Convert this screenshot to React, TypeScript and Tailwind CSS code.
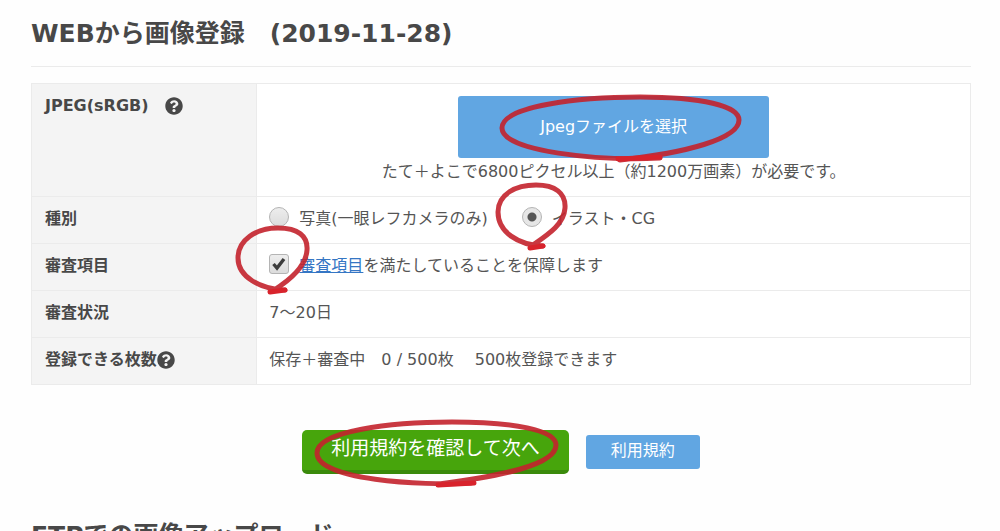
import { useState } from 'react';
import type { ReactNode } from 'react';
import { FaQuestionCircle } from 'react-icons/fa';

const MARKS = {
  file: {
    box: '0 0 250 72',
    className: 'left-[37px] -top-1 w-[250px] h-[72px]',
    loop: 'M165 66C105 69 7 60 7 36C7 14 84 5 145 5C207 5 244 14 244 28C244 47 190 61 125 68',
    tail: 'M123 67L165 65',
  },
  radio: {
    box: '0 0 80 72',
    className: '-left-[31px] -top-[28px] w-[80px] h-[72px]',
    loop: 'M52 67C27 66 7 53 7 33C7 15 25 6 45 6C64 6 75 14 74 29C73 45 58 55 42 66',
    tail: 'M39 69L52 67',
  },
  check: {
    box: '0 0 80 76',
    className: '-left-[37px] -top-[33px] w-[80px] h-[76px]',
    loop: 'M53 69C28 68 6 56 6 37C6 19 24 7 46 7C66 7 76 15 75 29C74 46 58 59 42 69',
    tail: 'M38 71L53 69',
  },
  next: {
    box: '0 0 250 76',
    className: 'left-[9px] -top-3 w-[250px] h-[76px]',
    loop: 'M160 65C110 68 6 62 6 35C6 13 80 4 141 4C203 4 245 12 245 27C245 47 190 58 128 66',
    tail: 'M127 67L163 65',
  },
};

// Hand drawn red circle around a control
const PenMark = ({ name }: { name: keyof typeof MARKS }) => {
  const mark = MARKS[name];
  return (
    <svg
      viewBox={mark.box}
      className={`absolute max-w-none pointer-events-none z-10 ${mark.className}`}
      fill="none"
      strokeWidth={5}
      strokeLinecap="round"
      aria-hidden="true"
    >
      <path d={mark.loop} stroke="#c3222c" strokeOpacity={0.9} />
      <path d={mark.tail} stroke="#d8232c" />
    </svg>
  );
};

const Row = ({ label, children }: { label: ReactNode; children: ReactNode }) => (
  <tr className="border border-[#ebebeb]">
    <th scope="row" className="w-[24%] bg-[#f4f4f4] border-r border-[#ebebeb] px-[13px] pt-[10px] pb-3 text-left align-top font-bold text-[#484848]">
      {label}
    </th>
    <td className="px-3 pt-[10px] pb-3 align-top">{children}</td>
  </tr>
);

const RADIO =
  'appearance-none block w-5 h-5 rounded-full border border-[#b4b4b4] bg-linear-to-b from-[#ededed] to-[#dcdcdc] checked:bg-[radial-gradient(circle,#555_0_4px,#e6e6e6_5px)]';

export default function App() {
  const [kind, setKind] = useState('illust');
  const [agreed, setAgreed] = useState(true);

  return (
    <main className="h-screen overflow-hidden bg-[#fefefe] pl-[31px] pr-[29px] pt-4 text-base leading-6 text-[#555] font-['DejaVu_Sans','Noto_Sans_CJK_JP',sans-serif]">
      <h1 className="border-b border-[#ebebeb] pb-[14px] text-[25px] leading-9 font-bold text-[#484848]">
        WEBから画像登録　(2019-11-28)
      </h1>

      <table className="mt-4 w-full border-collapse bg-white">
        <tbody>
          <Row
            label={
              <span className="flex items-center gap-4">
                JPEG(sRGB)
                <FaQuestionCircle size={18} />
              </span>
            }
          >
            <div className="flex flex-col items-center pt-0.5">
              <div className="relative">
                <button type="button" className="block rounded-[3px] bg-[#61a6e2] px-[82px] py-[19px] text-white">
                  Jpegファイルを選択
                </button>
                <PenMark name="file" />
              </div>
              <p className="pt-0.5">たて＋よこで6800ピクセル以上（約1200万画素）が必要です。</p>
            </div>
          </Row>
          <Row label="種別">
            <div className="flex gap-[34px]">
              <label className="flex items-start gap-[10px]">
                <input type="radio" name="kind" className={RADIO} checked={kind === 'photo'} onChange={() => setKind('photo')} />
                写真(一眼レフカメラのみ)
              </label>
              <label className="flex items-start gap-[10px]">
                <span className="relative">
                  <input type="radio" name="kind" className={RADIO} checked={kind === 'illust'} onChange={() => setKind('illust')} />
                  <PenMark name="radio" />
                </span>
                イラスト・CG
              </label>
            </div>
          </Row>
          <Row label="審査項目">
            <div className="flex items-start gap-[10px]">
              <span className="relative">
                <input
                  id="agree"
                  type="checkbox"
                  className="peer appearance-none block w-5 h-5 rounded-[3px] border border-[#b4b4b4] bg-linear-to-b from-[#ededed] to-[#dcdcdc]"
                  checked={agreed}
                  onChange={e => setAgreed(e.target.checked)}
                />
                <svg viewBox="0 0 20 20" className="absolute inset-0 hidden peer-checked:block pointer-events-none" aria-hidden="true">
                  <path d="M4.5 10L8 14L15 5" fill="none" stroke="#3c3c3c" strokeWidth={3.4} />
                </svg>
                <PenMark name="check" />
              </span>
              <label htmlFor="agree">
                <a href="#criteria" className="text-[#3576c4] underline">審査項目</a>を満たしていることを保障します
              </label>
            </div>
          </Row>
          <Row label="審査状況">7～20日</Row>
          <Row
            label={
              <span className="flex items-center">
                登録できる枚数
                <FaQuestionCircle size={18} />
              </span>
            }
          >
            保存＋審査中　0 / 500枚　 500枚登録できます
          </Row>
        </tbody>
      </table>

      <div className="mt-[45px] flex items-center justify-center gap-[17px]">
        <div className="relative">
          <button type="button" className="block rounded-[5px] border-b-4 border-[#3a8a0b] bg-[#47a50c] px-[29px] pt-1 pb-2 text-[19px] leading-7 text-white">
            利用規約を確認して次へ
          </button>
          <PenMark name="next" />
        </div>
        <button type="button" className="rounded-[3px] bg-[#61a6e2] px-[25px] pt-1 pb-[6px] text-white">
          利用規約
        </button>
      </div>

      <h2 className="mt-[44px] text-[25px] leading-9 font-bold text-[#484848]">FTPでの画像アップロード</h2>
    </main>
  );
}
